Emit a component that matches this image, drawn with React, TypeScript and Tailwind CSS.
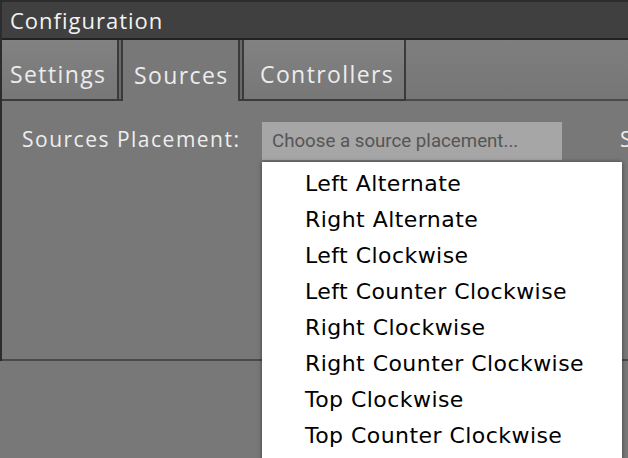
import React from "react";

const items = [
  "Left Alternate",
  "Right Alternate",
  "Left Clockwise",
  "Left Counter Clockwise",
  "Right Clockwise",
  "Right Counter Clockwise",
  "Top Clockwise",
  "Top Counter Clockwise",
];

export default function App() {
  return (
    <div
      className="relative w-[628px] h-[458px] overflow-hidden bg-[#787878]"
      style={{ fontFamily: "'Open Sans', 'Noto Sans', sans-serif" }}
    >
      <div className="border-t-2 border-l-2 border-[#2c2c2c]">
        {/* header */}
        <div className="h-[38px] bg-[#404040] border-b-2 border-[#222] flex items-center pl-[8px] text-[22px] tracking-[1px] text-[#f2f2f2]">
          Configuration
        </div>
        {/* tabs */}
        <div className="flex h-[61px] text-[23px] tracking-[1.4px] text-[#ececec]">
          <div className="w-[117px] shrink-0 flex items-center pt-[9px] pl-[8px] bg-gradient-to-b from-[#828282] to-[#777] border-r-2 border-b-2 border-[#3a3a3a]">
            Settings
          </div>
          <div className="w-[2px] shrink-0 bg-[#6a6a6a] border-b-2 border-[#3a3a3a]" />
          <div className="w-[119px] shrink-0 flex items-center pt-[9px] pl-[11px] bg-[#787878] border-l-2 border-r-2 border-[#3a3a3a]">
            Sources
          </div>
          <div className="w-[2px] shrink-0 bg-[#6a6a6a] border-b-2 border-[#3a3a3a]" />
          <div className="w-[164px] shrink-0 flex items-center pt-[9px] pl-[16px] bg-gradient-to-b from-[#828282] to-[#777] border-l-2 border-r-2 border-b-2 border-[#3a3a3a]">
            Controllers
          </div>
          <div className="flex-1 bg-gradient-to-b from-[#7e7e7e] to-[#767676] border-b-2 border-[#4a4a4a]" />
        </div>
        {/* content */}
        <div className="h-[260px] border-b-2 border-[#4a4a4a] flex items-start pt-[21px] pl-[20px] text-[#eeeeee] text-[21px] tracking-[1.5px] whitespace-nowrap">
          <div className="w-[240px] shrink-0 h-[35px] flex items-center">Sources Placement:</div>
          <div
            className="w-[300px] shrink-0 h-[38px] bg-[#a6a6a6] flex items-center pl-[10px] text-[18.7px] tracking-normal text-[#555]"
            style={{ fontFamily: "'Liberation Sans Narrow', 'Roboto', sans-serif" }}
          >
            Choose a source placement...
          </div>
          <div className="ml-[58px] shrink-0 h-[35px] flex items-center">S</div>
        </div>
      </div>
      {/* dropdown */}
      <div
        className="absolute left-[262px] top-[162px] w-[360px] h-[310px] bg-white pt-[4px] pl-[43px] shadow-[0_0_4px_rgba(0,0,0,0.5)] text-[22px] tracking-[0.45px] text-black"
        style={{ fontFamily: "'DejaVu Sans', sans-serif" }}
      >
        {items.map((t) => (
          <div key={t} className="h-[36px] leading-[36px]">
            {t}
          </div>
        ))}
      </div>
    </div>
  );
}
